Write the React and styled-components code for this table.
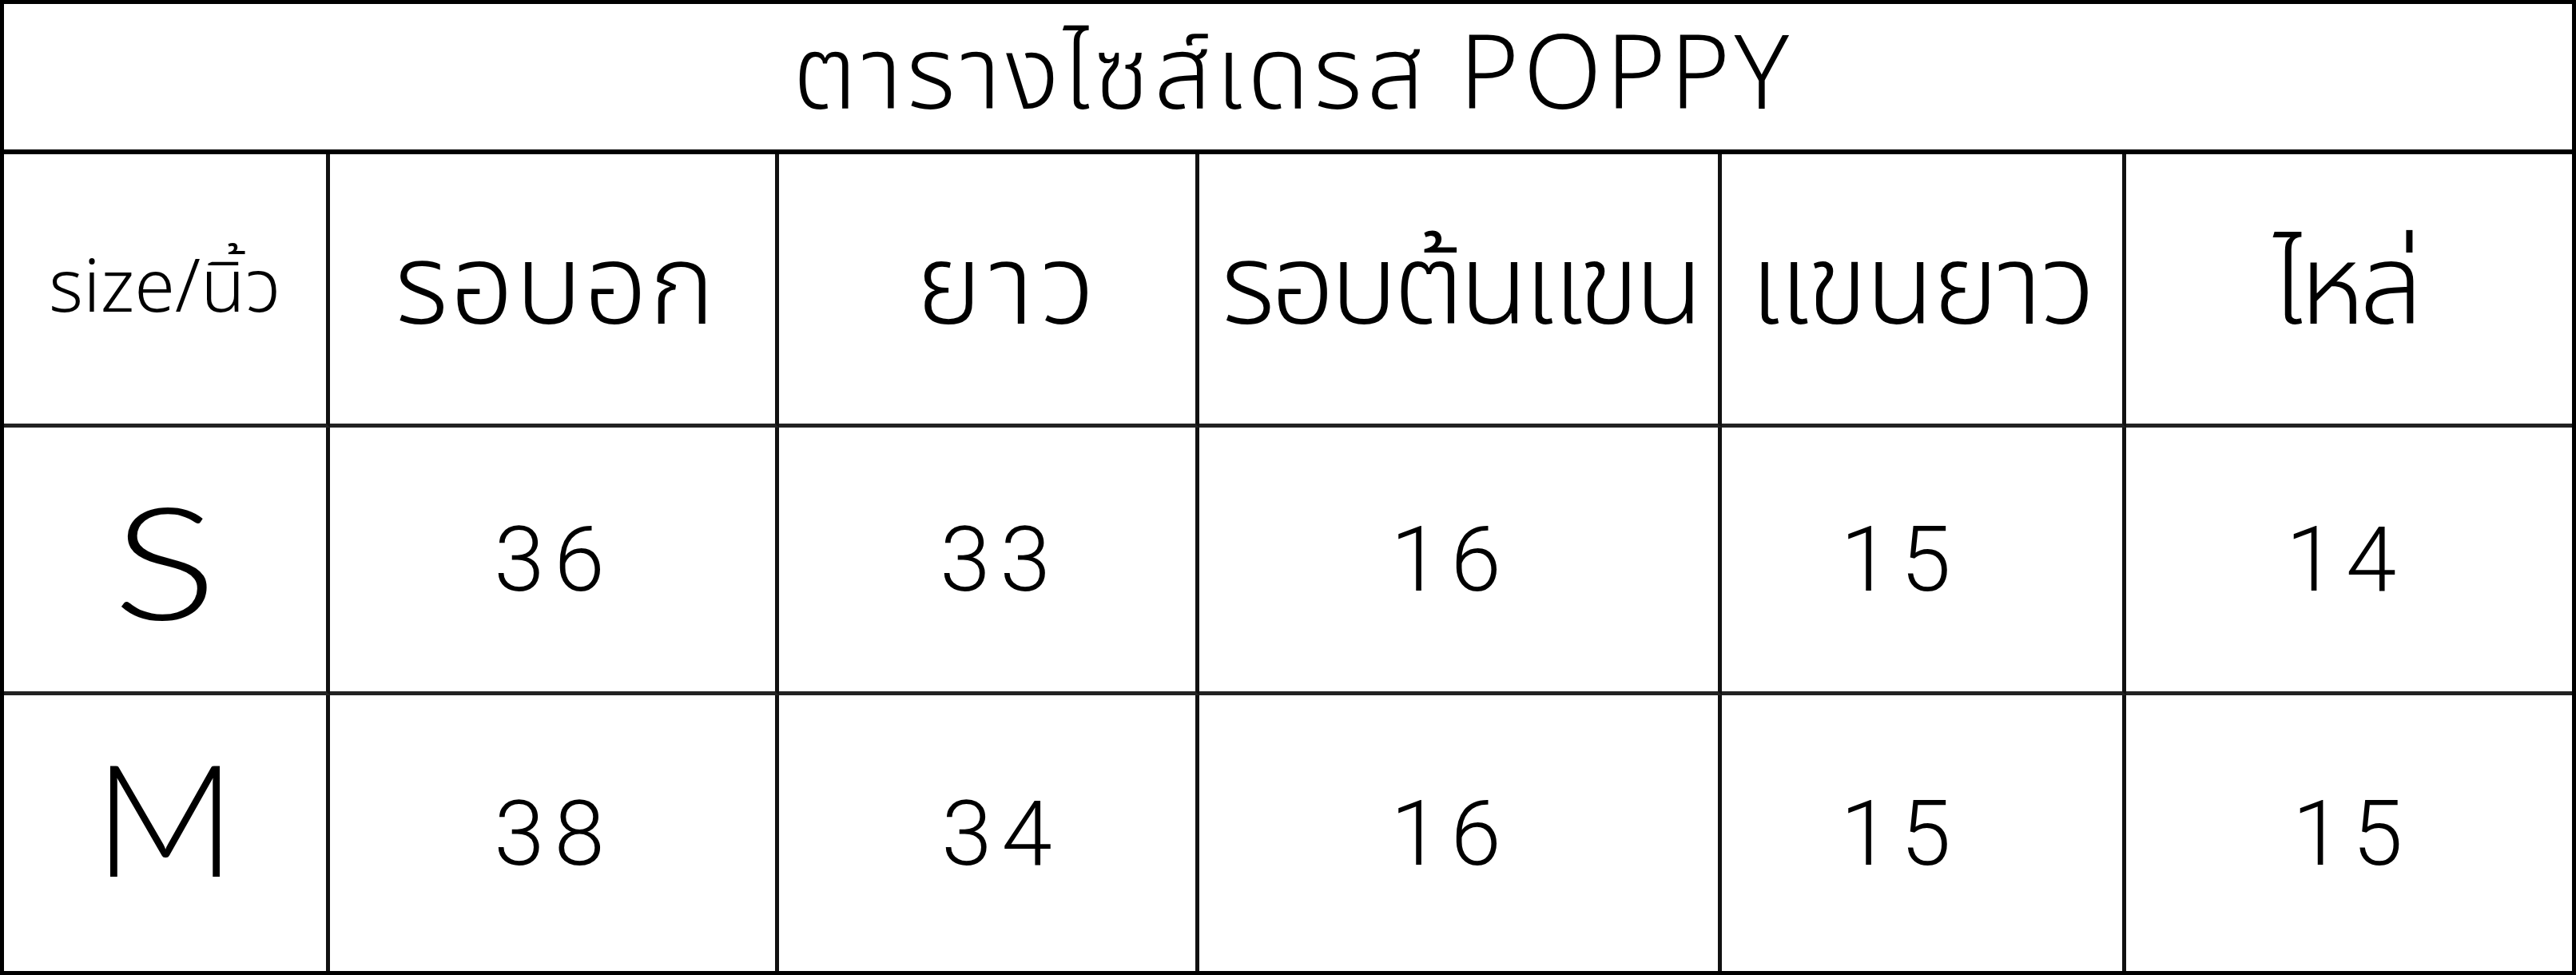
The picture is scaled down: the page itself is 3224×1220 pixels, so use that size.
import React from "react";
import styled, { createGlobalStyle } from "styled-components";

const thai = `"Noto Sans Thai", "Noto Sans Thai UI", "Noto Sans", "DejaVu Sans", sans-serif`;

const Global = createGlobalStyle`
  html, body { margin: 0; padding: 0; background: #fff; }
  body { font-family: ${thai}; color: #000; }
`;

const Sheet = styled.div`
  box-sizing: border-box;
  width: 3224px;
  height: 1220px;
  border: 5px solid #000;
  display: flex;
  flex-direction: column;
  background: #fff;
`;

const Title = styled.div`
  height: 188px;
  flex: none;
  box-sizing: border-box;
  border-bottom: 6px solid #000;
  display: flex;
  align-items: center;
  justify-content: center;
  font-size: 128px;
  font-weight: 300;
  line-height: 1;
  letter-spacing: 5px;
  white-space: nowrap;
  padding-top: 2px;
  padding-left: 12px;
`;

const Grid = styled.div`
  flex: 1;
  display: grid;
  grid-template-columns: 408px 562px 526px 654px 506px 1fr;
  grid-template-rows: 342px 335px 1fr;
`;

const Cell = styled.div`
  box-sizing: border-box;
  display: flex;
  align-items: center;
  justify-content: center;
  white-space: nowrap;
  border-right: ${(p) => (p.$last ? "none" : "5px solid #111")};
  border-bottom: ${(p) => (p.$bottom ? "none" : "5px solid #222")};
  line-height: 1;
  padding-left: ${(p) => Math.max(0, (p.$dx || 0) * 2)}px;
  padding-right: ${(p) => Math.max(0, -(p.$dx || 0) * 2)}px;
  padding-bottom: ${(p) => p.$up || 0}px;
`;

const Head = styled.span`
  font-family: ${thai};
  font-size: ${(p) => p.$size || 140}px;
  font-weight: 300;
  letter-spacing: ${(p) => p.$track || 0}px;
`;

const SizeMark = styled.span`
  display: inline-block;
  font-family: "Lato", "Open Sans", "Noto Sans", sans-serif;
  font-size: 196px;
  font-weight: 300;
  transform: scaleX(${(p) => p.$sx || 1});
`;

const Num = styled.span`
  font-family: "Roboto", "Noto Sans", sans-serif;
  font-size: 114px;
  font-weight: 300;
  letter-spacing: 12px;
`;

const heads = [
  { t: "รอบอก", dx: 4, track: 2 },
  { t: "ยาว", dx: 27, track: 8 },
  { t: "รอบต้นแขน", dx: 2, track: -5 },
  { t: "แขนยาว", dx: 0, track: -2 },
  { t: "ไหล่", dx: -4, track: -6 },
];

const rows = [
  { size: "S", sx: 1.25, up: 0, vals: ["36", "33", "16", "15", "14"], dx: [2, 16, -10, -27, -4] },
  { size: "M", sx: 1, up: 42, vals: ["38", "34", "16", "15", "15"], dx: [2, 18, -10, -27, 4] },
];

export default function App() {
  return (
    <>
      <Global />
      <Sheet>
        <Title>ตารางไซส์เดรส POPPY</Title>
        <Grid>
          <Cell>
            <Head $size={92}>size/นิ้ว</Head>
          </Cell>
          {heads.map((h, i) => (
            <Cell key={h.t} $last={i === heads.length - 1} $dx={h.dx}>
              <Head $track={h.track}>{h.t}</Head>
            </Cell>
          ))}
          {rows.map((r, ri) => (
            <React.Fragment key={r.size}>
              <Cell $bottom={ri === rows.length - 1} $up={r.up}>
                <SizeMark $sx={r.sx}>{r.size}</SizeMark>
              </Cell>
              {r.vals.map((v, i) => (
                <Cell
                  key={i}
                  $last={i === r.vals.length - 1}
                  $bottom={ri === rows.length - 1}
                  $dx={r.dx[i]}
                >
                  <Num>{v}</Num>
                </Cell>
              ))}
            </React.Fragment>
          ))}
        </Grid>
      </Sheet>
    </>
  );
}
